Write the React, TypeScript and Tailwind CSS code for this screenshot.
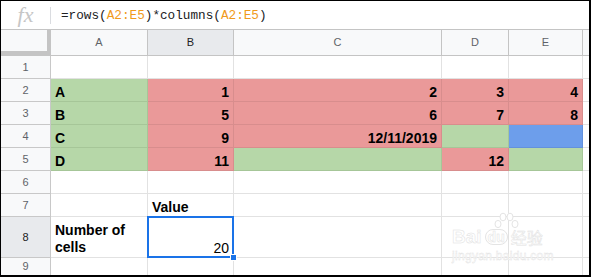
import React from "react"

type Fill = "g" | "r" | "b" | undefined
type Cell = { t?: string; fill?: Fill; bold?: boolean; right?: boolean; wrap?: boolean; sel?: boolean }

const fillClass = (f: Fill) => {
  if (f === "g") return "bg-[#b6d7a8] border-[#a6c698]"
  if (f === "r") return "bg-[#ea9999] border-[#d88d8d]"
  if (f === "b") return "bg-[#6d9eeb] border-[#6391dc]"
  return "bg-white border-[#e2e2e2]"
}

const rows: { n: number; h: string; active?: boolean; cells: Cell[] }[] = [
  { n: 1, h: "h-[23px]", cells: [{}, {}, {}, {}, {}] },
  {
    n: 2,
    h: "h-[23px]",
    cells: [
      { t: "A", fill: "g", bold: true },
      { t: "1", fill: "r", bold: true, right: true },
      { t: "2", fill: "r", bold: true, right: true },
      { t: "3", fill: "r", bold: true, right: true },
      { t: "4", fill: "r", bold: true, right: true },
    ],
  },
  {
    n: 3,
    h: "h-[23px]",
    cells: [
      { t: "B", fill: "g", bold: true },
      { t: "5", fill: "r", bold: true, right: true },
      { t: "6", fill: "r", bold: true, right: true },
      { t: "7", fill: "r", bold: true, right: true },
      { t: "8", fill: "r", bold: true, right: true },
    ],
  },
  {
    n: 4,
    h: "h-[23px]",
    cells: [
      { t: "C", fill: "g", bold: true },
      { t: "9", fill: "r", bold: true, right: true },
      { t: "12/11/2019", fill: "r", bold: true, right: true },
      { fill: "g" },
      { fill: "b" },
    ],
  },
  {
    n: 5,
    h: "h-[23px]",
    cells: [
      { t: "D", fill: "g", bold: true },
      { t: "11", fill: "r", bold: true, right: true },
      { fill: "g" },
      { t: "12", fill: "r", bold: true, right: true },
      { fill: "g" },
    ],
  },
  { n: 6, h: "h-[23px]", cells: [{}, {}, {}, {}, {}] },
  { n: 7, h: "h-[23px]", cells: [{}, { t: "Value", bold: true }, {}, {}, {}] },
  {
    n: 8,
    h: "h-[41px]",
    active: true,
    cells: [{ t: "Number of cells", bold: true, wrap: true }, { t: "20", right: true, sel: true }, {}, {}, {}],
  },
  { n: 9, h: "h-[17px]", cells: [{}, {}, {}, {}, {}] },
]

const cols = ["A", "B", "C", "D", "E"]

function Paw() {
  return (
    <svg width="30" height="22" viewBox="0 0 30 22" className="absolute left-[40px] top-0">
      <g fill="#ffffff" stroke="#e4e4e4" strokeWidth="1">
        <ellipse cx="6" cy="12" rx="3" ry="3.6" />
        <ellipse cx="11" cy="5" rx="3" ry="3.8" />
        <ellipse cx="18" cy="5" rx="3" ry="3.8" />
        <ellipse cx="23" cy="12" rx="3" ry="3.6" />
      </g>
    </svg>
  )
}

export default function App() {
  return (
    <div className="relative w-[591px] h-[277px] overflow-hidden border-l border-t border-r-2 border-b-2 border-black bg-white font-['Liberation_Sans',Arial,sans-serif]">
      {/* formula bar */}
      <div className="flex h-[29px] items-center border-b border-[#c4c4c4] bg-white">
        <div className="flex w-[49px] items-center justify-center">
          <span className="font-['Liberation_Serif',serif] text-[22px] italic leading-none text-[#c6c6c6]">fx</span>
        </div>
        <div className="h-[17px] w-px bg-[#dadce0]" />
        <div className="pl-[10px] pt-[1px] font-['Liberation_Mono',monospace] text-[12.7px] text-[#202124]">
          =rows(<span className="text-[#f09a1a]">A2:E5</span>)*columns(<span className="text-[#f09a1a]">A2:E5</span>)
        </div>
      </div>

      {/* column headers */}
      <div className="grid h-[26px] grid-cols-[50px_97px_86px_208px_67px_74px_6px] bg-[#f8f9fa] text-[11px] text-[#5f6368]">
        <div className="border-b-[5px] border-r-4 border-[#c4c4c4]" />
        {cols.map((c) => (
          <div
            key={c}
            className={`flex items-center justify-center border-b border-r border-[#c4c4c4] ${
              c === "B" ? "bg-[#e8eaed] text-[#202124]" : ""
            }`}
          >
            {c}
          </div>
        ))}
        <div className="border-b border-[#c4c4c4]" />
      </div>

      {/* body */}
      {rows.map((r) => (
        <div key={r.n} className={`grid grid-cols-[50px_97px_86px_208px_67px_74px_6px] ${r.h}`}>
          <div
            className={`flex items-center justify-center border-b border-r border-[#c8c8c8] text-[11px] ${
              r.active ? "bg-[#e8eaed] text-[#202124]" : "bg-[#f8f9fa] text-[#5f6368]"
            }`}
          >
            {r.n}
          </div>
          {r.cells.map((c, i) => (
            <div
              key={i}
              className={`relative flex items-end border-b border-r px-[4px] pb-px text-[14px] text-black ${fillClass(c.fill)} ${
                c.right ? "justify-end" : "justify-start"
              } ${c.bold ? "font-bold" : ""} ${c.wrap ? "leading-[17px]" : "leading-[16px] whitespace-nowrap"}`}
            >
              {c.t && <span>{c.t}</span>}
              {c.sel && (
                <>
                  <div className="absolute -bottom-px -left-px -right-px -top-px z-10 border-2 border-[#1a73e8]" />
                  <div className="absolute -bottom-[4px] -right-[4px] z-20 h-[7px] w-[7px] border border-white bg-[#1a73e8]" />
                </>
              )}
            </div>
          ))}
          <div className="border-b border-[#e2e2e2]" />
        </div>
      ))}

      {/* watermark */}
      <div className="pointer-events-none absolute left-[451px] top-[211px] h-[55px] w-[110px] text-white">
        <Paw />
        <div className="absolute left-0 top-[15px] flex items-center gap-[3px] text-[19px] font-bold leading-none [-webkit-text-stroke:0.5px_#e2e2e2]">
          <span>Bai</span>
          <span className="rounded-full border border-[#e4e4e4] px-[2px] text-[14px]">du</span>
          <span className="font-['Noto_Sans_CJK_SC',sans-serif] text-[16px] font-normal">经验</span>
        </div>
        <div className="absolute left-0 top-[38px] text-[12px] leading-none tracking-[0.3px] [-webkit-text-stroke:0.4px_#e2e2e2]">
          jingyan.baidu.com
        </div>
      </div>
    </div>
  )
}
